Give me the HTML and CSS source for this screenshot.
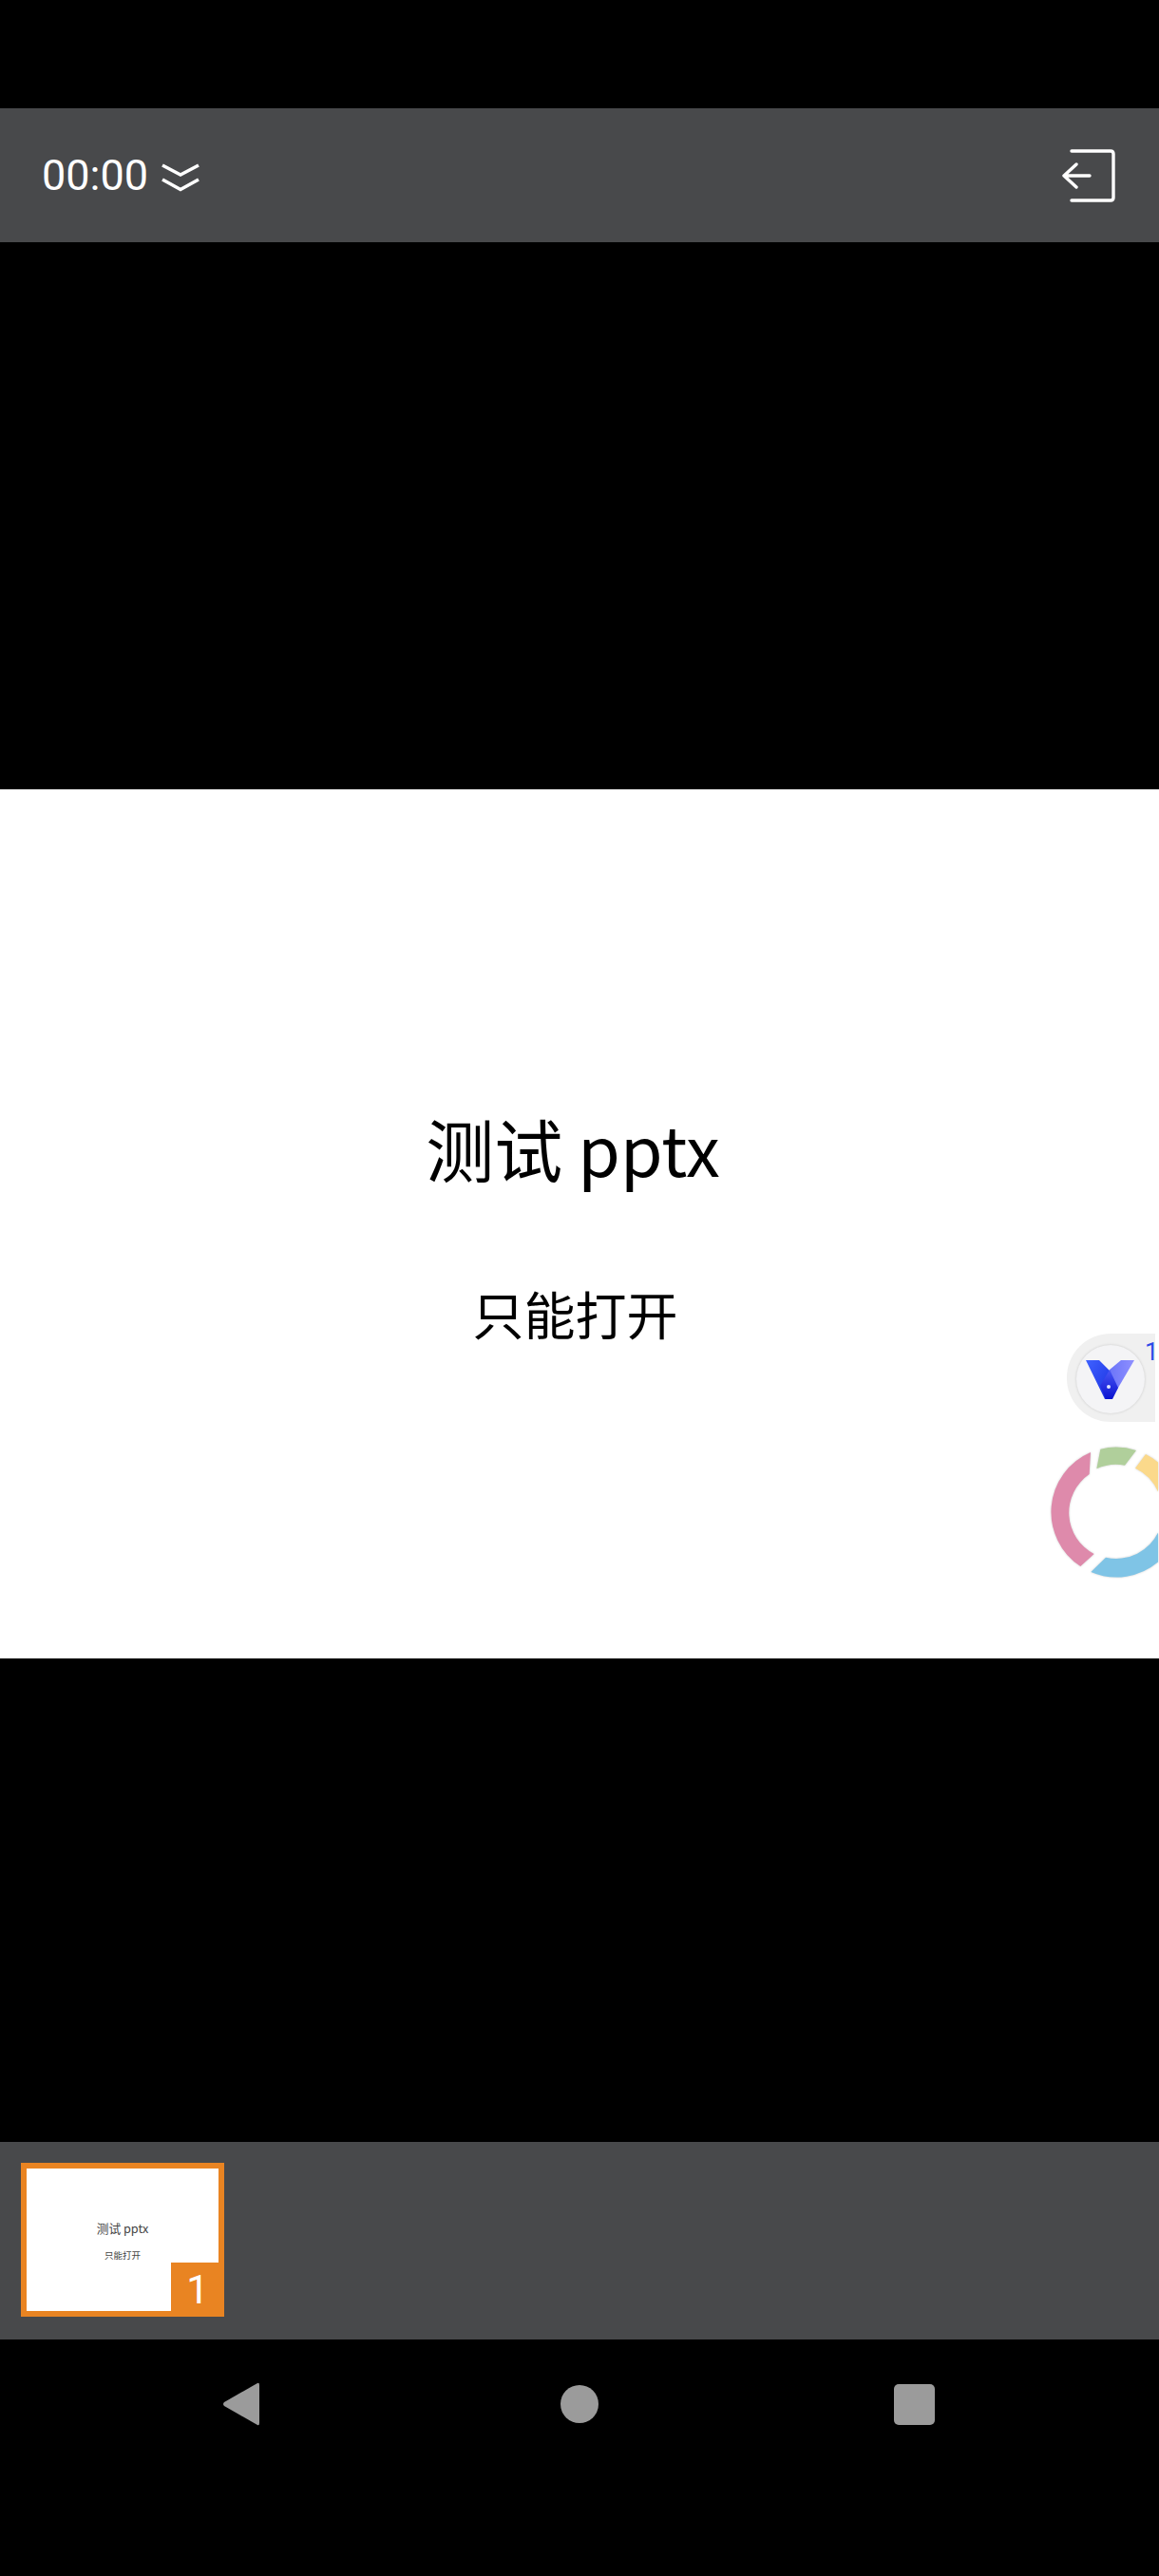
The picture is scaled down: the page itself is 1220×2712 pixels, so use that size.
FILE: index.html
```html
<!DOCTYPE html>
<html lang="zh">
<head>
<meta charset="utf-8">
<title>测试 pptx</title>
<link rel="stylesheet" href="styles.css">
</head>
<body>
<div class="screen">
  <div class="status"></div>
  <header class="topbar">
    <div class="timer">
      <span class="time">00:00</span>
      <svg class="chevrons" width="42" height="34" viewBox="0 0 42 34"><path d="M2 6 L21 16 L40 6 M2 21 L21 31.5 L40 21" fill="none" stroke="#fff" stroke-width="3.6"/></svg>
    </div>
    <svg class="exit" width="56" height="56" viewBox="0 0 56 56"><path d="M10 2 H51 Q54 2 54 5 V51 Q54 54 51 54 H10" fill="none" stroke="#fff" stroke-width="3.4" stroke-linecap="round"/><path d="M29 28 H2 M15 16 L2 28 L15 40" fill="none" stroke="#fff" stroke-width="3.4" stroke-linecap="round" stroke-linejoin="round"/></svg>
  </header>
  <div class="gap-top"></div>
  <main class="slide">
    <h1 class="slide-title">测试 pptx</h1>
    <p class="slide-sub">只能打开</p>
  </main>
  <div class="gap-bottom"></div>
  <section class="strip">
    <div class="thumb">
      <div class="thumb-title">测试 pptx</div>
      <div class="thumb-sub">只能打开</div>
      <div class="thumb-num">1</div>
    </div>
  </section>
  <nav class="navbar">
    <svg width="40" height="46" viewBox="0 0 40 46"><path d="M37 1 Q39 0 39 3 V43 Q39 46 37 45 L2 25 Q0 23 2 21 Z" fill="#9b9b9b"/></svg>
    <svg width="40" height="40" viewBox="0 0 40 40"><circle cx="20" cy="20" r="20" fill="#9b9b9b"/></svg>
    <svg width="43" height="43" viewBox="0 0 43 43"><rect width="43" height="43" rx="5" fill="#9b9b9b"/></svg>
  </nav>
  <aside class="badge">
    <div class="badge-circle">
      <svg width="52" height="41" viewBox="0 0 52 41">
        <defs>
          <linearGradient id="vl" x1="0" y1="0" x2="1" y2="1"><stop offset="0" stop-color="#3f62ff"/><stop offset="1" stop-color="#1b30e0"/></linearGradient>
          <linearGradient id="vr" x1="0" y1="0" x2="1" y2="0"><stop offset="0" stop-color="#6a74f8"/><stop offset="1" stop-color="#8f90ff"/></linearGradient>
          <linearGradient id="vd" x1="0" y1="0" x2="0" y2="1"><stop offset="0" stop-color="#4a58f5"/><stop offset="1" stop-color="#0a12d0"/></linearGradient>
        </defs>
        <path d="M0 0 H14 L26 12 L18 26 L24 41 H20 Z" fill="url(#vl)"/>
        <path d="M37 0 H51 L27 41 H24 L25 10 Z" fill="url(#vr)"/>
        <path d="M25 10 L34 29 L28 41 H21 L15 27 Z" fill="url(#vd)"/>
        <circle cx="24" cy="28" r="2" fill="#dfe6ff"/>
      </svg>
    </div>
    <span class="badge-num">1</span>
  </aside>
  <svg class="ring" width="113" height="146" viewBox="0 0 339 438">
    <g transform="translate(-78,-428)">
      <path d="M204 446 A 205 205 0 0 0 172 806 L215 767 A 147 147 0 0 1 200 515 Z" fill="#de8aab"/>
      <path d="M235 436 A 205 205 0 0 1 348 440 L312 487 A 147 147 0 0 0 223 498 Z" fill="#b0cf9b"/>
      <path d="M378 452 A 205 205 0 0 1 420 480 V578 A 147 147 0 0 0 345 496 Z" fill="#fbd98b"/>
      <path d="M205 824 A 205 205 0 0 0 420 790 V693 A 147 147 0 0 1 252 778 Z" fill="#7fc4e6"/>
    </g>
  </svg>
</div>
</body>
</html>
```
FILE: styles.css
```css
* { box-sizing: border-box; }
html, body { margin: 0; padding: 0; background: #000; }
.screen {
  position: relative;
  width: 1220px;
  height: 2712px;
  overflow: hidden;
  display: flex;
  flex-direction: column;
  background: #000;
  font-family: Roboto, "Noto Sans CJK SC", sans-serif;
}
.status { height: 114px; }
.topbar {
  height: 141px;
  background: #48494b;
  display: flex;
  align-items: center;
  justify-content: space-between;
  padding: 0 46px 0 44px;
  color: #fff;
}
.timer { display: flex; align-items: center; gap: 13px; }
.time { font-size: 45px; line-height: 1; }
.chevrons { display: block; }
.exit { display: block; }
.gap-top { height: 576px; }
.slide {
  height: 915px;
  background: #fff;
  display: flex;
  flex-direction: column;
  align-items: center;
  padding-right: 14px;
  color: #000;
  font-family: "Noto Sans CJK SC", "Noto Sans", sans-serif;
  font-weight: 400;
}
.slide-title { margin: 327px 0 0; font-size: 72px; line-height: 100px; font-weight: 400; }
.slide-sub { margin: 87px 0 0 5px; font-size: 54px; line-height: 76px; }
.gap-bottom { height: 509px; }
.strip {
  height: 208px;
  background: #48494b;
  padding: 22px 0 0 22px;
}
.thumb {
  position: relative;
  width: 214px;
  height: 162px;
  background: #fff;
  border: 6px solid #e98422;
  display: flex;
  flex-direction: column;
  align-items: center;
  color: #444;
  font-family: "Noto Sans CJK SC", sans-serif;
}
.thumb-title { margin-top: 54px; font-size: 12.7px; line-height: 18px; }
.thumb-sub { margin-top: 12px; font-size: 9.5px; line-height: 14px; }
.thumb-num {
  position: absolute;
  right: -6px;
  bottom: -6px;
  width: 56px;
  height: 57px;
  background: #e98422;
  color: #fff;
  font-family: Roboto, sans-serif;
  font-size: 42px;
  line-height: 57px;
  text-align: center;
}
.navbar {
  flex: 1;
  display: grid;
  grid-template-columns: 356px 351px 43px;
  align-items: center;
  padding: 45px 0 158px 234px;
}
.navbar svg { display: block; }
.badge {
  position: absolute;
  left: 1123px;
  top: 1404px;
  width: 93px;
  height: 93px;
  background: #f0f0f0;
  border-radius: 46px 0 0 46px;
}
.badge-circle {
  position: absolute;
  left: 10px;
  top: 12px;
  width: 72px;
  height: 72px;
  border-radius: 50%;
  background: #f4f4f6;
  box-shadow: 0 0 3px rgba(0,0,0,.16);
  display: flex;
  align-items: center;
  justify-content: center;
}
.badge-num {
  position: absolute;
  left: 82px;
  top: 4px;
  font-size: 26px;
  line-height: 30px;
  color: #2b4be8;
}
.ring {
  position: absolute;
  left: 1106px;
  top: 1523px;
  filter: drop-shadow(0 0 1px rgba(0,0,0,.2));
}
```
